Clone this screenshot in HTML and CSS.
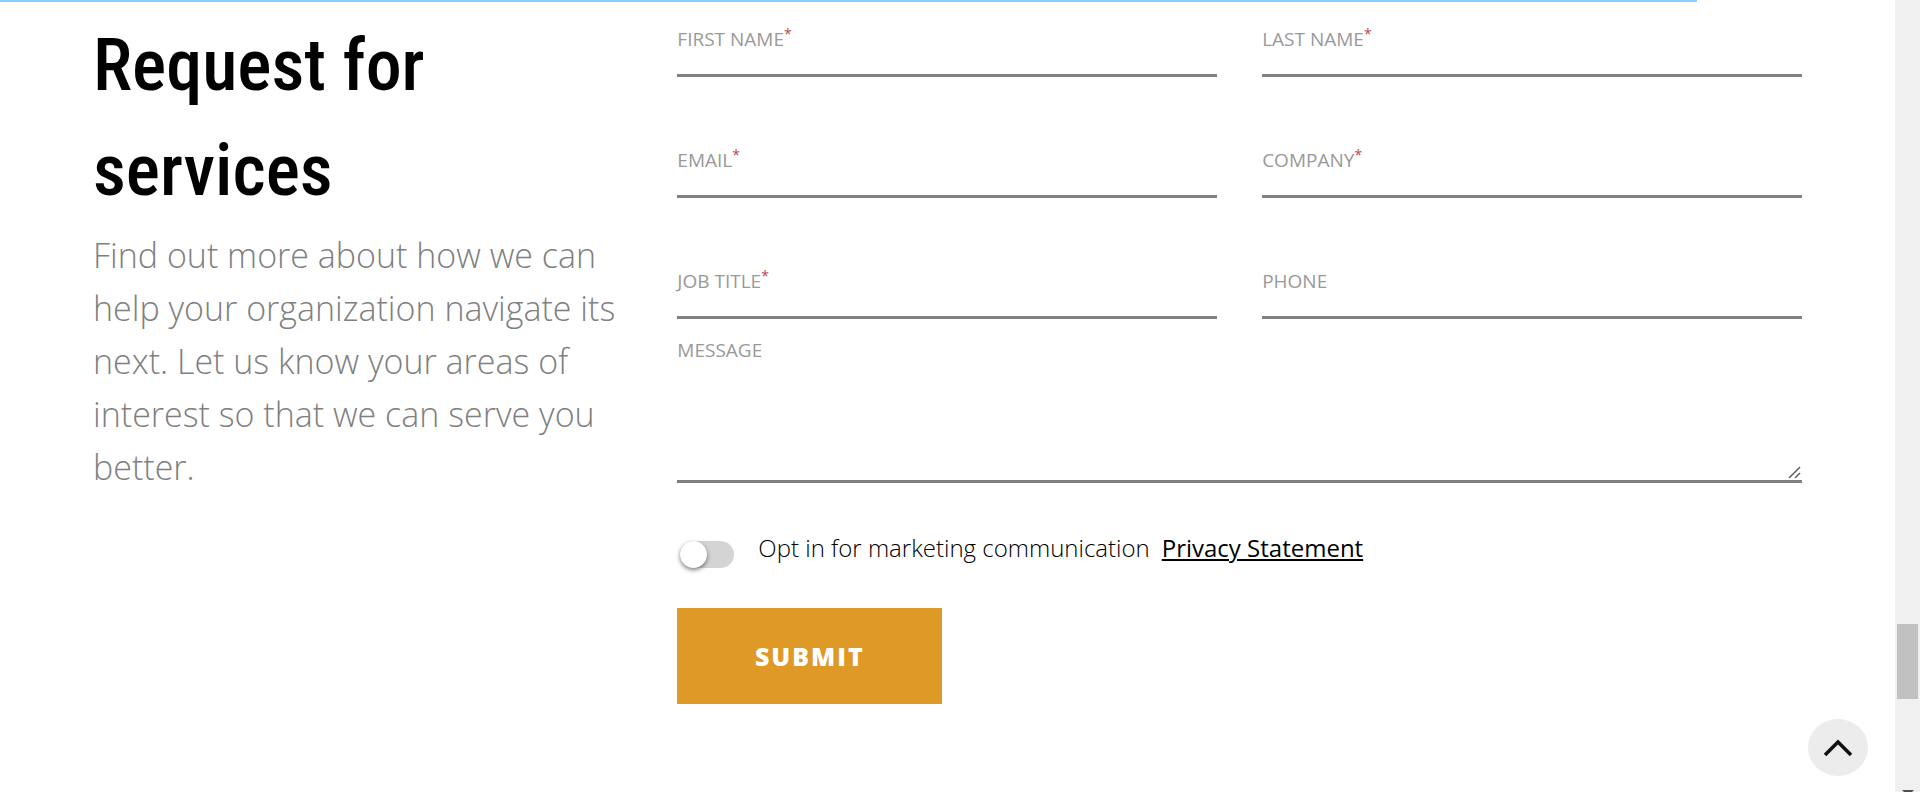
FILE: index.html
```html
<!DOCTYPE html>
<html lang="en">
<head>
<meta charset="utf-8">
<title>Request for services</title>
<link rel="stylesheet" href="styles.css">
</head>
<body>
<div class="progress"></div>
<div class="page">
  <main class="content">
    <section class="intro">
      <h1 class="title">Request for services</h1>
      <p class="lead">Find out more about how we can help your organization navigate its next. Let us know your areas of interest so that we can serve you better.</p>
    </section>
    <form class="form">
      <div class="fields">
        <div class="field"><label for="first">FIRST NAME<sup>*</sup></label><input id="first" type="text" required></div>
        <div class="field"><label for="last">LAST NAME<sup>*</sup></label><input id="last" type="text" required></div>
        <div class="field"><label for="email">EMAIL<sup>*</sup></label><input id="email" type="email" required></div>
        <div class="field"><label for="company">COMPANY<sup>*</sup></label><input id="company" type="text" required></div>
        <div class="field"><label for="job">JOB TITLE<sup>*</sup></label><input id="job" type="text" required></div>
        <div class="field"><label for="phone">PHONE</label><input id="phone" type="tel"></div>
      </div>
      <div class="field message"><label for="message">MESSAGE</label><textarea id="message"></textarea></div>
      <div class="consent">
        <input class="toggle" id="optin" type="checkbox">
        <p class="consent-text"><label for="optin">Opt in for marketing communication</label><a class="privacy" href="#privacy">Privacy Statement</a></p>
      </div>
      <button class="submit" type="submit">SUBMIT</button>
    </form>
  </main>
  <div class="scrollbar" aria-hidden="true">
    <div class="thumb"></div>
    <svg class="arrow" width="12" height="6" viewBox="0 0 12 6"><path d="M0 0h12L6 6z" fill="#505050"/></svg>
  </div>
</div>
<button class="to-top" type="button" aria-label="Back to top">
  <svg width="32" height="20" viewBox="0 0 32 20"><path d="M3 17L16 4l13 13" fill="none" stroke="#111" stroke-width="3.5"/></svg>
</button>
</body>
</html>
```
FILE: styles.css
```css
* { box-sizing: border-box; }

body {
  margin: 0;
  background: #fff;
  color: #000;
  font-family: "Open Sans", "Noto Sans", sans-serif;
  overflow: hidden;
}

.progress {
  position: fixed;
  top: 0;
  left: 0;
  width: 88.4%;
  height: 2px;
  background: #90cdff;
}

.page {
  display: flex;
  min-height: 100vh;
}

.content {
  flex: 1;
  display: grid;
  grid-template-columns: 1fr 2fr;
  gap: 22px;
  align-content: start;
  padding: 0 93px;
}

.intro { padding-right: 22px; }

.title {
  margin: 13px 0 0;
  font-family: "Roboto Condensed", "Liberation Sans Narrow", "Roboto", sans-serif;
  font-size: 72px;
  font-weight: 500;
  line-height: 105px;
}

.lead {
  margin: 6px 0 0;
  color: #808080;
  font-size: 34px;
  font-weight: 300;
  line-height: 53px;
}

.form { padding-top: 25px; }

.fields {
  display: grid;
  grid-template-columns: 1fr 1fr;
  gap: 69px 45px;
}

.field {
  display: flex;
  flex-direction: column;
  min-width: 0;
}

.field label {
  color: #999;
  font-size: 19px;
  line-height: 28px;
}

.field sup {
  color: #b9484e;
  font-size: 14px;
  line-height: 0;
}

.field input,
.field textarea {
  width: 100%;
  height: 24px;
  padding: 0;
  border: 0;
  border-bottom: 3px solid #808080;
  border-radius: 0;
  outline: 0;
  background: transparent;
  font: inherit;
}

.field textarea {
  height: 119px;
  resize: both;
}

.field textarea::-webkit-resizer {
  background: url("data:image/svg+xml,%3Csvg xmlns='http://www.w3.org/2000/svg' width='15' height='15'%3E%3Cpath d='M2 13L13 2M8 13l5-5' stroke='%23606060' stroke-width='1.5'/%3E%3C/svg%3E") no-repeat;
}

.message { margin-top: 17px; }

.consent {
  display: flex;
  align-items: center;
  gap: 24px;
  margin: 45px 0 40px 3px;
}

.toggle {
  appearance: none;
  display: flex;
  width: 54px;
  height: 27px;
  margin: 13px 0 0;
  border-radius: 14px;
  background: #d4d4d4;
}

.toggle::before {
  content: "";
  width: 27px;
  height: 27px;
  border-radius: 50%;
  background: #fff;
  box-shadow: 0 2px 4px rgba(0, 0, 0, .5);
}

.toggle:checked { justify-content: flex-end; }

.consent-text {
  margin: 0;
  font-size: 24px;
  font-weight: 300;
  line-height: 36px;
}

.privacy {
  margin-left: 12px;
  color: #000;
  font-weight: 400;
}

.submit {
  width: 265px;
  height: 96px;
  border: 0;
  background: #de9926;
  color: #fff;
  font: 800 25px "Open Sans", sans-serif;
  letter-spacing: 2px;
}

.scrollbar {
  display: grid;
  grid-template-rows: 624fr 75fr 91fr 2px;
  justify-items: center;
  width: 25px;
  background: #f0f0f0;
}

.thumb {
  grid-row: 2;
  width: 21px;
  background: #c1c1c1;
}

.arrow { grid-row: 4; }

.to-top {
  position: fixed;
  right: 52px;
  bottom: 16px;
  display: flex;
  align-items: center;
  justify-content: center;
  width: 60px;
  height: 57px;
  padding: 0;
  border: 0;
  border-radius: 50%;
  background: #ececec;
}
```
